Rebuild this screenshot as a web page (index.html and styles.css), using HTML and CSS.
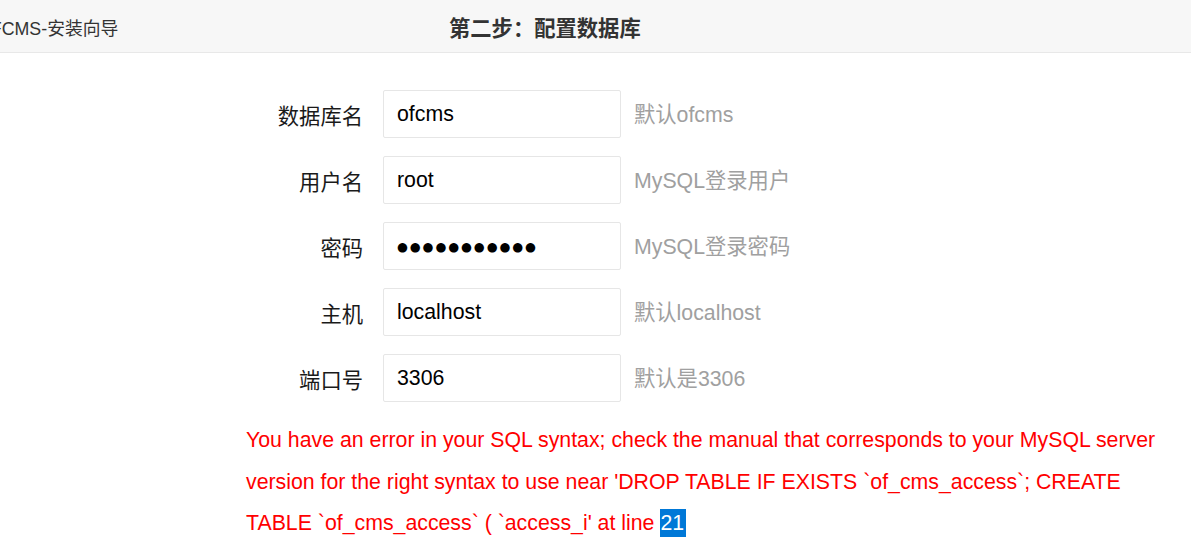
FILE: index.html
```html
<!DOCTYPE html>
<html lang="zh-CN">
<head>
<meta charset="utf-8">
<title>OFCMS-安装向导</title>
<link rel="stylesheet" href="styles.css">
</head>
<body>
<header class="header">
  <div class="brand">OFCMS-安装向导</div>
  <h1 class="title">第二步：配置数据库</h1>
</header>
<main class="main">
  <form class="form">
    <div class="row">
      <label class="label">数据库名</label>
      <div class="field">ofcms</div>
      <span class="hint">默认ofcms</span>
    </div>
    <div class="row">
      <label class="label">用户名</label>
      <div class="field">root</div>
      <span class="hint">MySQL登录用户</span>
    </div>
    <div class="row">
      <label class="label">密码</label>
      <div class="field dots">●●●●●●●●●●●</div>
      <span class="hint">MySQL登录密码</span>
    </div>
    <div class="row">
      <label class="label">主机</label>
      <div class="field">localhost</div>
      <span class="hint">默认localhost</span>
    </div>
    <div class="row">
      <label class="label">端口号</label>
      <div class="field">3306</div>
      <span class="hint">默认是3306</span>
    </div>
  </form>
  <p class="error">You have an error in your SQL syntax; check the manual that corresponds to your MySQL server version for the right syntax to use near 'DROP TABLE IF EXISTS `of_cms_access`; CREATE TABLE `of_cms_access` ( `access_i' at line <span class="sel">21</span></p>
</main>
</body>
</html>
```
FILE: styles.css
```css
* { box-sizing: border-box; }
html, body { margin: 0; padding: 0; background: #fff; }
body {
  font-family: "Liberation Sans", Arial, "Noto Sans CJK SC", sans-serif;
  color: #333;
  overflow: hidden;
}
.header {
  height: 53px;
  background: #f7f7f7;
  border-bottom: 1px solid #e8e8e8;
  display: flex;
  align-items: center;
  overflow: hidden;
}
.brand {
  font-size: 17.8px;
  color: #333;
  margin-left: -23px;
  width: 472px;
  flex: none;
  padding-top: 2px;
  white-space: nowrap;
}
.title {
  margin: 0;
  font-size: 21.3px;
  font-weight: bold;
  color: #333;
}
.main {
  padding: 37px 0 0 246px;
}
.form {
  display: flex;
  flex-direction: column;
  gap: 18px;
}
.row {
  display: flex;
  align-items: center;
  height: 48px;
}
.label {
  width: 137px;
  padding-right: 20px;
  text-align: right;
  font-size: 21.3px;
  color: #1a1a1a;
  flex: none;
}
.field {
  width: 238px;
  height: 48px;
  border: 1px solid #e6e6e6;
  border-radius: 2px;
  padding: 0 13px;
  display: flex;
  align-items: center;
  font-size: 21.3px;
  color: #000;
  flex: none;
}
.dots {
  font-family: "DejaVu Sans", sans-serif;
  font-size: 12.5px;
  letter-spacing: 1.9px;
}
.hint {
  margin-left: 13px;
  margin-bottom: 3px;
  font-size: 21.3px;
  color: #a0a0a0;
  white-space: nowrap;
}
.error {
  margin: 18px 0 0;
  width: 930px;
  color: #ff0000;
  font-size: 21.3px;
  line-height: 41.5px;
}
.sel {
  background: #0078d7;
  color: #fff;
  padding: 2px 2px 2px 0;
}
```
